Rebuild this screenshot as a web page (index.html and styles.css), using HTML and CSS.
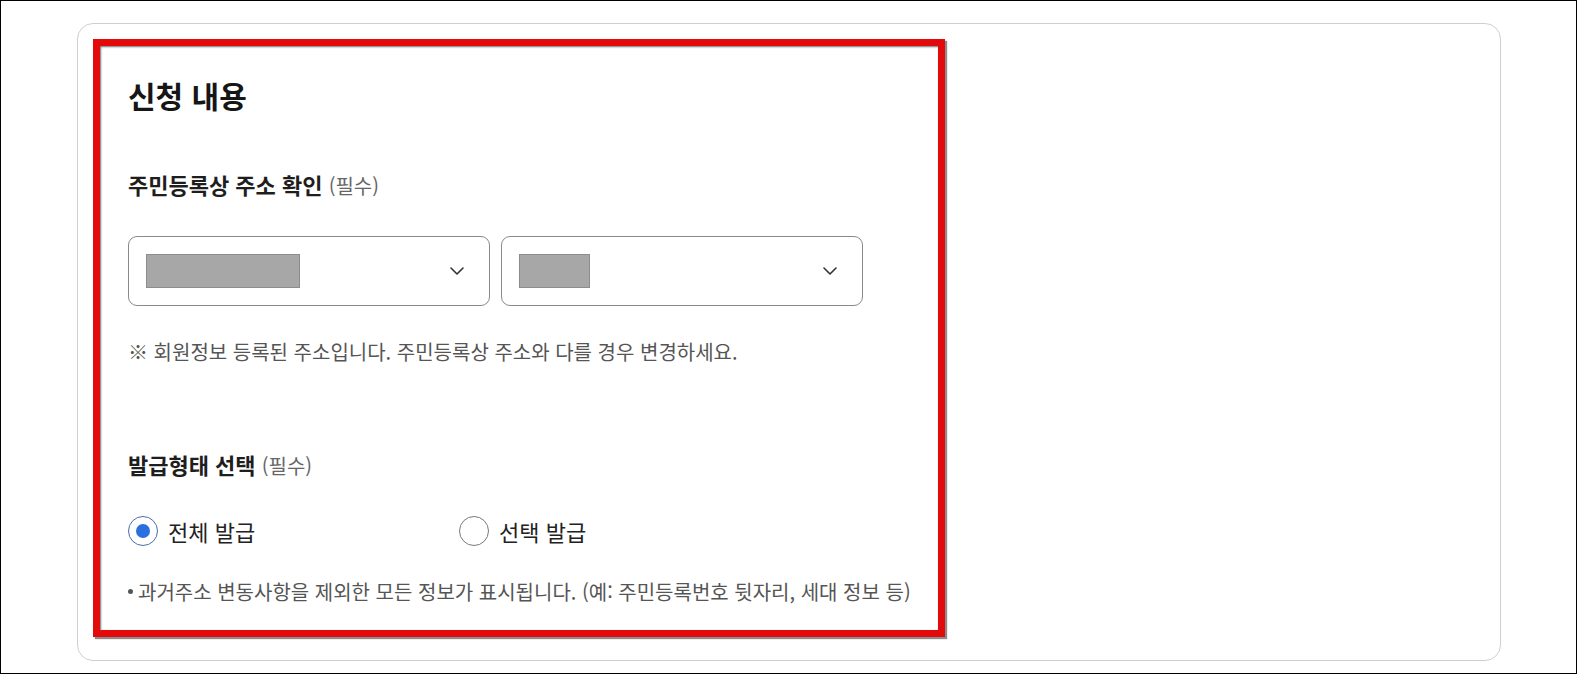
FILE: index.html
```html
<!DOCTYPE html>
<html lang="ko">
<head>
<meta charset="utf-8">
<title>신청 내용</title>
<link rel="stylesheet" href="styles.css">
</head>
<body>
<div class="frame">
  <div class="card">
    <section class="panel">
      <h1 class="title">신청 내용</h1>

      <h2 class="label">주민등록상 주소 확인 <span class="req">(필수)</span></h2>
      <div class="selects">
        <div class="select">
          <span class="mask mask-long"></span>
          <svg class="chev" width="14" height="8" viewBox="0 0 14 8"><polyline points="1,1 7,7 13,1" fill="none" stroke="#333" stroke-width="1.6" stroke-linecap="round" stroke-linejoin="round"/></svg>
        </div>
        <div class="select">
          <span class="mask mask-short"></span>
          <svg class="chev" width="14" height="8" viewBox="0 0 14 8"><polyline points="1,1 7,7 13,1" fill="none" stroke="#333" stroke-width="1.6" stroke-linecap="round" stroke-linejoin="round"/></svg>
        </div>
      </div>
      <p class="notice">※ 회원정보 등록된 주소입니다. 주민등록상 주소와 다를 경우 변경하세요.</p>

      <h2 class="label label-2">발급형태 선택 <span class="req">(필수)</span></h2>
      <div class="radios">
        <label class="radio"><span class="dot dot-on"></span><span class="rtext">전체 발급</span></label>
        <label class="radio"><span class="dot"></span><span class="rtext">선택 발급</span></label>
      </div>
      <p class="foot"><span class="bullet"></span>과거주소 변동사항을 제외한 모든 정보가 표시됩니다. (예: 주민등록번호 뒷자리, 세대 정보 등)</p>
    </section>
  </div>
</div>
</body>
</html>
```
FILE: styles.css
```css
* { box-sizing: border-box; }
html, body { margin: 0; padding: 0; background: #fff; }
body {
  font-family: "Noto Sans CJK KR", "Noto Sans", sans-serif;
  color: #222;
}
.frame {
  width: 1577px;
  height: 674px;
  border: 1px solid #000;
  padding: 22px 0 0 76px;
}
.card {
  width: 1424px;
  height: 638px;
  border: 1px solid #cfcfcf;
  border-radius: 16px;
  padding: 15px;
  background: #fff;
}
.panel {
  width: 852px;
  height: 598px;
  border: 7px solid #e20a0a;
  box-shadow: 2px 2px 1px rgba(0,0,0,0.45), inset 1px 1px 2px rgba(0,0,0,0.55);
  padding: 32px 20px 0 28px;
  background: #fff;
}
.title {
  margin: 0;
  font-size: 30px;
  line-height: 34px;
  font-weight: 700;
  color: #161616;
}
.label {
  margin: 58px 0 0 0;
  font-size: 22px;
  line-height: 28px;
  font-weight: 700;
  color: #1e1e1e;
}
.label-2 { margin-top: 85px; }
.req {
  font-size: 20px;
  line-height: 1;
  font-weight: 400;
  color: #666;
}
.selects {
  margin-top: 38px;
  display: grid;
  grid-template-columns: 362px 362px;
  column-gap: 11px;
}
.select {
  height: 70px;
  border: 1px solid #8a8a8a;
  border-radius: 9px;
  display: flex;
  align-items: center;
  justify-content: space-between;
  padding: 0 25px 0 17px;
}
.mask {
  display: block;
  height: 34px;
  background: #a7a7a7;
  border: 1px solid #8c8c8c;
}
.mask-long { width: 154px; }
.mask-short { width: 71px; }
.chev { display: block; }
.notice {
  margin: 33px 0 0 0;
  font-size: 20px;
  line-height: 26px;
  color: #555;
}
.radios {
  margin-top: 38px;
  display: grid;
  grid-template-columns: 331px 1fr;
}
.radio {
  display: flex;
  align-items: center;
  gap: 10px;
  height: 30px;
}
.dot {
  width: 30px;
  height: 30px;
  border: 1px solid #7a7a7a;
  border-radius: 50%;
  display: flex;
  align-items: center;
  justify-content: center;
  background: #fff;
}
.dot-on { border-color: #4b6ea8; }
.dot-on::after {
  content: "";
  width: 14px;
  height: 14px;
  border-radius: 50%;
  background: #2a6fe0;
}
.rtext {
  font-size: 22px;
  line-height: 30px;
  color: #222;
}
.foot {
  margin: 33px 0 0 0;
  font-size: 20px;
  line-height: 26px;
  color: #555;
  white-space: nowrap;
}
.bullet {
  display: inline-block;
  width: 5px;
  height: 5px;
  border-radius: 50%;
  background: #555;
  margin-right: 5px;
  vertical-align: 6px;
}
```
